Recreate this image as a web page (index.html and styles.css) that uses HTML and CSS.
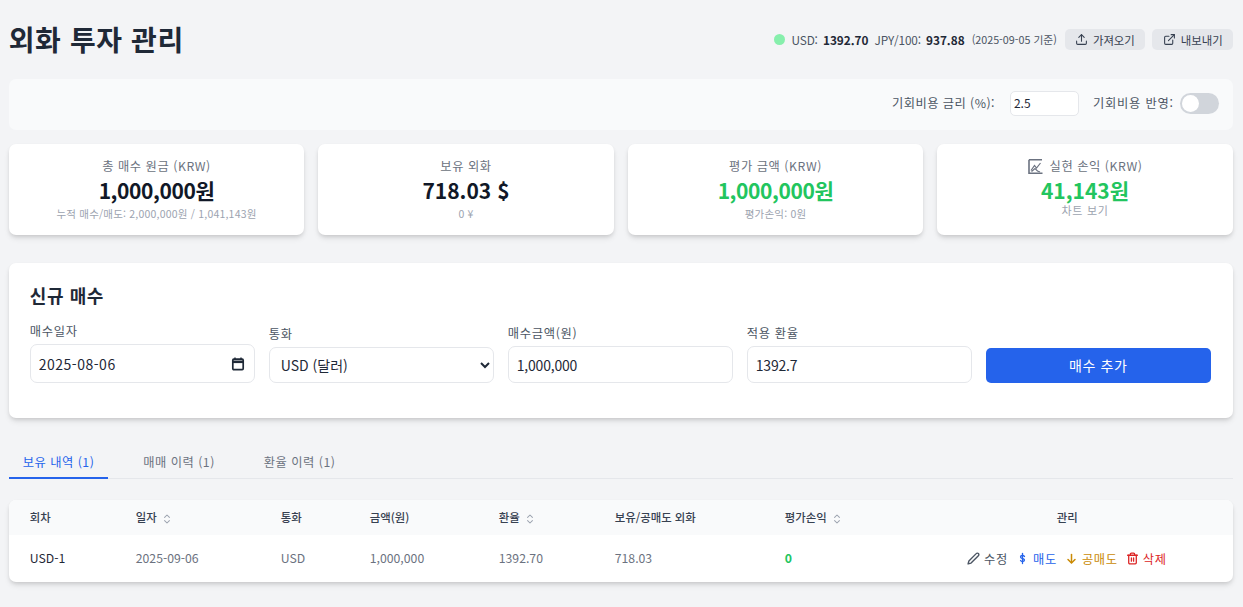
FILE: index.html
```html
<!DOCTYPE html>
<html lang="ko">
<head>
<meta charset="utf-8">
<title>외화 투자 관리</title>
<link rel="stylesheet" href="styles.css">
</head>
<body>
<main class="page">
  <header class="top">
    <h1 class="title">외화 투자 관리</h1>
    <div class="top-right">
      <span class="dot"></span>
      <span class="rate">USD: <b>1392.70</b></span>
      <span class="rate">JPY/100: <b>937.88</b></span>
      <span class="rate-date">(2025-09-05 기준)</span>
      <button class="ghost-btn">
        <svg class="ic14" viewBox="0 0 24 24" fill="none" stroke="currentColor" stroke-width="2" stroke-linecap="round" stroke-linejoin="round"><path d="M21 15v4a2 2 0 0 1-2 2H5a2 2 0 0 1-2-2v-4"/><path d="M17 8l-5-5-5 5"/><path d="M12 3v12"/></svg>
        가져오기
      </button>
      <button class="ghost-btn">
        <svg class="ic14" viewBox="0 0 24 24" fill="none" stroke="currentColor" stroke-width="2" stroke-linecap="round" stroke-linejoin="round"><path d="M18 13v6a2 2 0 0 1-2 2H5a2 2 0 0 1-2-2V8a2 2 0 0 1 2-2h6"/><path d="M15 3h6v6"/><path d="M10 14L21 3"/></svg>
        내보내기
      </button>
    </div>
  </header>

  <section class="settings">
    <label class="set-label" for="rate">기회비용 금리 (%):</label>
    <input id="rate" class="rate-input" type="text" value="2.5">
    <span class="set-label set-label-2">기회비용 반영:</span>
    <span class="toggle"><span class="knob"></span></span>
  </section>

  <section class="stats">
    <div class="stat">
      <div class="stat-label">총 매수 원금 (KRW)</div>
      <div class="stat-value long">1,000,000원</div>
      <div class="stat-sub">누적 매수/매도: 2,000,000원 / 1,041,143원</div>
    </div>
    <div class="stat">
      <div class="stat-label">보유 외화</div>
      <div class="stat-value">718.03 $</div>
      <div class="stat-sub">0 ¥</div>
    </div>
    <div class="stat">
      <div class="stat-label">평가 금액 (KRW)</div>
      <div class="stat-value long green">1,000,000원</div>
      <div class="stat-sub">평가손익: 0원</div>
    </div>
    <div class="stat">
      <div class="stat-label with-icon">
        <svg class="chart-ic" viewBox="0 0 15 15" fill="none" stroke="currentColor"><path d="M1 .8h13M1 .8v13.400h13.500" stroke-width="1.600"/><path d="M3 11.500L6.500 6.500l2 2.500L12.500 4" stroke-width="1.200"/><path d="M3.500 12.500L7 9.500l2.500 2.500 2.500 1" stroke-width="1.200"/></svg>
        실현 손익 (KRW)
      </div>
      <div class="stat-value green compact">41,143원</div>
      <div class="stat-sub tight">차트 보기</div>
    </div>
  </section>

  <section class="form-card">
    <h2 class="form-title">신규 매수</h2>
    <div class="form-grid">
      <div class="field">
        <label class="field-label">매수일자</label>
        <div class="control date">
          <input class="date-text" type="text" value="2025-08-06">
          <svg class="cal" viewBox="0 0 16 16" fill="none" stroke="currentColor" stroke-width="1.700"><rect x="2.800" y="3.200" width="10.400" height="10.400" rx="1"/><path d="M2.800 5.800h10.400" stroke-width="2.600"/><path d="M5 1.500v2M11 1.500v2" stroke-width="1.400"/></svg>
        </div>
      </div>
      <div class="field">
        <label class="field-label">통화</label>
        <select class="control select"><option>USD (달러)</option><option>JPY (엔)</option></select>
      </div>
      <div class="field">
        <label class="field-label">매수금액(원)</label>
        <input class="control text" type="text" value="1,000,000">
      </div>
      <div class="field">
        <label class="field-label">적용 환율</label>
        <input class="control text" type="text" value="1392.7">
      </div>
      <button class="primary">매수 추가</button>
    </div>
  </section>

  <nav class="tabs">
    <span class="tab active">보유 내역 (1)</span>
    <span class="tab">매매 이력 (1)</span>
    <span class="tab">환율 이력 (1)</span>
  </nav>

  <section class="table-card">
    <table class="table">
      <colgroup>
        <col class="c1"><col class="c2"><col class="c3"><col class="c4"><col class="c5"><col class="c6"><col class="c7"><col class="c8">
      </colgroup>
      <thead>
        <tr>
          <th>회차</th>
          <th>일자<svg class="sort" viewBox="0 0 10 14" fill="none" stroke="currentColor" stroke-width="1.300" stroke-linecap="round" stroke-linejoin="round"><path d="M2 5l3-3 3 3"/><path d="M2 9l3 3 3-3"/></svg></th>
          <th>통화</th>
          <th>금액(원)</th>
          <th>환율<svg class="sort" viewBox="0 0 10 14" fill="none" stroke="currentColor" stroke-width="1.300" stroke-linecap="round" stroke-linejoin="round"><path d="M2 5l3-3 3 3"/><path d="M2 9l3 3 3-3"/></svg></th>
          <th>보유/공매도 외화</th>
          <th>평가손익<svg class="sort" viewBox="0 0 10 14" fill="none" stroke="currentColor" stroke-width="1.300" stroke-linecap="round" stroke-linejoin="round"><path d="M2 5l3-3 3 3"/><path d="M2 9l3 3 3-3"/></svg></th>
          <th class="center">관리</th>
        </tr>
      </thead>
      <tbody>
        <tr>
          <td class="strong">USD-1</td>
          <td>2025-09-06</td>
          <td>USD</td>
          <td>1,000,000</td>
          <td>1392.70</td>
          <td>718.03</td>
          <td class="pl">0</td>
          <td class="actions-cell">
            <div class="actions">
              <span class="act act-edit"><svg class="ic13" viewBox="0 0 24 24" fill="none" stroke="currentColor" stroke-width="2.600" stroke-linecap="round" stroke-linejoin="round"><path d="M17 3a2.830 2.830 0 1 1 4 4L7.500 20.500 2 22l1.500-5.500L17 3z"/></svg>수정</span>
              <span class="act act-sell"><svg class="ic13" viewBox="0 0 13 13" fill="none" stroke="currentColor" stroke-width="1.300" stroke-linecap="round"><path d="M6.500 1.500v10"/><path d="M8.500 4.500c-.4-.7-1.100-1-2-1-1.100 0-2 .5-2 1.400s.9 1.300 2 1.600 2 .7 2 1.600-.9 1.400-2 1.400c-.9 0-1.600-.3-2-1"/></svg>매도</span>
              <span class="act act-short"><svg class="ic13" viewBox="0 0 13 13" fill="none" stroke="currentColor" stroke-width="1.500" stroke-linecap="round" stroke-linejoin="round"><path d="M6.500 2.500v8"/><path d="M3 7.500l3.500 3.500L10 7.500"/></svg>공매도</span>
              <span class="act act-del"><svg class="ic13" viewBox="0 0 24 24" fill="none" stroke="currentColor" stroke-width="2.400" stroke-linecap="round" stroke-linejoin="round"><path d="M3 6h18"/><path d="M19 6v14a2 2 0 0 1-2 2H7a2 2 0 0 1-2-2V6"/><path d="M8 6V4a2 2 0 0 1 2-2h4a2 2 0 0 1 2 2v2"/><path d="M10 11v6"/><path d="M14 11v6"/></svg>삭제</span>
            </div>
          </td>
        </tr>
      </tbody>
    </table>
  </section>
</main>
</body>
</html>
```
FILE: styles.css
```css
* { box-sizing: border-box; }
html, body { margin: 0; padding: 0; }
body {
  background: #f3f4f6;
  color: #1f2937;
  font-family: "Noto Sans CJK KR", sans-serif;
  font-size: 14px;
}
.page { padding: 0 10.25px 25px 8.75px; }

.top { display: flex; justify-content: space-between; align-items: center; height: 79px; }
.title { margin: 0 0 2px; font-size: 28px; font-weight: 700; color: #1f2937; line-height: 38px; letter-spacing: 0.6px; }
.top-right { display: flex; align-items: center; color: #4b5563; font-size: 11.8px; }
.dot { width: 11px; height: 11px; border-radius: 50%; background: #86efac; margin-right: 7px; }
.rate { margin-right: 7px; letter-spacing: -0.15px; }
.dot + .rate { margin-right: 6px; }
.rate b { color: #1f2937; font-weight: 700; margin-left: 2px; letter-spacing: 0; }
.rate-date { font-size: 10.75px; margin-right: 8px; }
.ghost-btn {
  display: inline-flex; align-items: center; gap: 5px;
  height: 21px; padding: 0 10px 0 11px; margin-right: 7px;
  border: 0; border-radius: 5px;
  background: #e5e7eb; color: #374151;
  font: inherit; font-size: 11.4px;
}
.ghost-btn:first-of-type { padding-left: 10px; }
.ghost-btn:last-child { margin-right: 0; }
.ic14 { width: 13px; height: 13px; }

.settings {
  display: flex; justify-content: flex-end; align-items: center;
  height: 51px; padding: 0 14px 3px;
  background: #f9fafb; border-radius: 7px;
}
.set-label { color: #4b5563; font-size: 12.25px; letter-spacing: 0.45px; }
.rate-input {
  width: 69px; height: 25px; margin: 0 14px 0 15px;
  padding: 0 3px 1px; border: 1px solid #e5e7eb; border-radius: 5px;
  background: #fff; color: #1f2937; font: inherit; font-size: 12px;
}
.set-label-2 { margin-right: 6px; letter-spacing: 0.8px; }
.toggle { display: block; width: 39px; height: 21px; border-radius: 11px; background: #d1d5db; padding: 2px; }
.knob { display: block; width: 17px; height: 17px; border-radius: 50%; background: #fff; }

.stats { display: grid; grid-template-columns: repeat(4, 1fr); gap: 14px; margin-top: 14px; }
.stat {
  height: 91px; padding-top: 13px; text-align: center;
  background: #fff; border-radius: 7px;
  box-shadow: 0 2px 4px -1px rgba(0,0,0,.12), 0 4px 6px -1px rgba(0,0,0,.1);
}
.stat-label { font-size: 12.25px; line-height: 18px; color: #6b7280; letter-spacing: 0.55px; }
.with-icon { display: flex; justify-content: center; align-items: center; gap: 7px; }
.chart-ic { width: 15px; height: 15px; color: #6b7280; }
.stat-value { font-size: 21px; line-height: 28px; font-weight: 700; color: #111827; margin-top: 1px; }
.stat-value.compact { line-height: 24px; margin-top: 3px; }
.long { letter-spacing: -0.4px; }
.stat-value.green { color: #22c55e; }
.stat-sub { font-size: 10.5px; line-height: 16px; color: #9ca3af; margin-top: 2px; letter-spacing: 0.2px; }
.stat-sub.tight { margin-top: 0; font-size: 11px; letter-spacing: 0.7px; }

.form-card {
  height: 155px; margin-top: 28px; padding: 20px 22px 21px 21px;
  background: #fff; border-radius: 7px;
  box-shadow: 0 2px 4px -1px rgba(0,0,0,.12), 0 4px 6px -1px rgba(0,0,0,.1);
}
.form-title { margin: 0 0 16px; font-size: 18px; line-height: 24px; font-weight: 700; color: #1f2937; letter-spacing: 0.6px; }
.form-grid { display: grid; grid-template-columns: repeat(5, 1fr); gap: 14px; align-items: end; }
.field { display: flex; flex-direction: column; }
.field-label { font-size: 12.25px; line-height: 17px; color: #4b5563; margin-bottom: 4px; letter-spacing: 0.7px; }
.control {
  width: 100%; border: 1px solid #e5e7eb; border-radius: 7px;
  background: #fff; color: #1f2937; font: inherit; font-size: 14px;
}
.date { display: flex; align-items: center; height: 39px; padding: 0 8px 0 8px; }
.date-text { flex: 1; min-width: 0; border: 0; padding: 0; outline: 0; background: none; color: inherit; font: inherit; letter-spacing: 0.5px; }
.cal { width: 16px; height: 16px; color: #1f2937; }
.select { height: 36px; padding: 0 7px; }
.text { height: 37px; padding: 0 8px; letter-spacing: -0.2px; }
.primary {
  height: 35px; padding: 0 0 2px; border: 0; border-radius: 5px;
  background: #2563eb; color: #fff; font: inherit; font-size: 14px; letter-spacing: 0.6px;
}

.tabs { display: flex; margin-top: 27px; border-bottom: 1px solid #e5e7eb; height: 34px; }
.tab { padding: 0 14px; margin-right: 21px; font-size: 12.25px; line-height: 34px; color: #6b7280; height: 34px; letter-spacing: 0.5px; }
.tab.active { color: #2563eb; border-bottom: 2px solid #2563eb; }

.table-card {
  margin-top: 21px; background: #fff; border-radius: 7px; overflow: hidden;
  box-shadow: 0 2px 4px -1px rgba(0,0,0,.12), 0 4px 6px -1px rgba(0,0,0,.1);
}
.table { width: 100%; border-collapse: collapse; table-layout: fixed; }
.c1 { width: 106px; } .c2 { width: 145px; } .c3 { width: 89px; } .c4 { width: 129px; }
.c5 { width: 116px; } .c6 { width: 170px; } .c7 { width: 135px; } .c8 { width: auto; }
th {
  height: 35px; padding: 0 0 1px 21px; text-align: left;
  background: #f9fafb; color: #374151; font-size: 11.4px; font-weight: 500;
}
th.center { text-align: center; padding: 0 0 1px 3px; }
td { height: 47px; padding: 0 0 2px 21px; font-size: 12.25px; color: #6b7280; }
td.strong { color: #1f2937; }
td.pl { color: #22c55e; font-weight: 700; }
.sort { width: 8px; height: 12px; margin-left: 6px; vertical-align: middle; color: #9ca3af; }
.actions-cell { padding: 0 66px 0 0; }
.actions { display: flex; justify-content: flex-end; align-items: center; gap: 8px; }
.act { display: inline-flex; align-items: center; gap: 4px; font-size: 12.25px; letter-spacing: 0.7px; }
.act-edit { color: #4b5563; }
.act-sell { color: #2563eb; }
.act-short { color: #ca8a04; }
.act-del { color: #dc2626; }
.ic13 { width: 13px; height: 13px; flex: none; }
```
